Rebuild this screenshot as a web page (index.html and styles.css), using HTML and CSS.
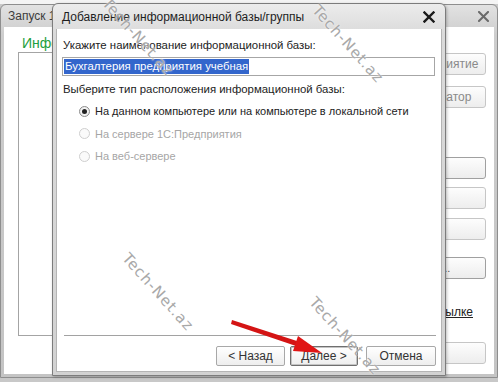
FILE: index.html
```html
<!DOCTYPE html>
<html lang="ru">
<head>
  <meta charset="UTF-8" />
  <title>Добавление информационной базы/группы</title>
  <link rel="stylesheet" href="styles.css">
</head>
<body>
  <div class="desktop">
    <div class="window main">
      <div class="titlebar">
        <span class="title">Запуск 1С:Предприятия</span>
        <svg class="close close-main" width="11" height="11" viewBox="0 0 11 11"><path d="M1 1L10 10M10 1L1 10" /></svg>
      </div>
      <div class="main-body">
        <div class="main-left">
          <div class="group-title">Информационные базы</div>
          <div class="list"></div>
        </div>
        <div class="main-right">
          <div class="btn big b1">1С:Предприятие</div>
          <div class="btn big b2">Конфигуратор</div>
          <div class="btn b3">Добавить...</div>
          <div class="btn b4">Изменить...</div>
          <div class="btn b5">Удалить</div>
          <div class="btn b6">Настройка...</div>
          <div class="link"><span>Получить по ссылке</span></div>
          <div class="btn b7">Выход</div>
        </div>
      </div>
    </div>

    <div class="window dialog">
      <div class="titlebar">
        <span class="title">Добавление информационной базы/группы</span>
        <svg class="close close-dialog" width="12" height="12" viewBox="0 0 12 12"><path d="M1.5 1.5L10.5 10.5M10.5 1.5L1.5 10.5" /></svg>
      </div>
      <div class="dialog-body">
        <div class="label">Укажите наименование информационной базы:</div>
        <div class="input"><span class="selected">Бухгалтерия предприятия учебная</span></div>
        <div class="label label-type">Выберите тип расположения информационной базы:</div>
        <div class="radios">
          <div class="radio checked"><span class="dot"></span>На данном компьютере или на компьютере в локальной сети</div>
          <div class="radio disabled"><span class="dot"></span>На сервере 1С:Предприятия</div>
          <div class="radio disabled"><span class="dot"></span>На веб-сервере</div>
        </div>
        <div class="spacer"></div>
        <div class="separator"></div>
        <div class="buttons">
          <div class="dbtn back">&lt; Назад</div>
          <div class="dbtn next">Далее &gt;</div>
          <div class="dbtn cancel">Отмена</div>
        </div>
      </div>
    </div>

    <div class="watermark wm1">Tech-Net.az</div>
    <div class="watermark wm2">Tech-Net.az</div>
    <div class="watermark wm3">Tech-Net.az</div>
    <div class="watermark wm4">Tech-Net.az</div>

    <svg class="arrow" width="498" height="382" viewBox="0 0 498 382">
      <path d="M232 320 L300 342 L299 347 L231 324 Z" fill="#d41414" />
      <path d="M322 353 L293 351 L298 336 Z" fill="#e01515" />
    </svg>
  </div>
</body>
</html>
```

FILE: styles.css
```css
body {
  margin: 0;
  font-family: 'Liberation Sans', Arial, sans-serif;
  font-size: 11.4px;
  color: #222;
}
.desktop {
  position: relative;
  width: 498px;
  height: 382px;
  overflow: hidden;
  background: linear-gradient(#f4f4f4 0, #f4f4f4 4px, #c8c8c8 4px);
}
.window {
  position: absolute;
  box-sizing: border-box;
  display: flex;
  flex-direction: column;
  border-radius: 6px 6px 0 0;
}
.titlebar {
  display: flex;
  align-items: center;
  justify-content: space-between;
}
.close path {
  fill: none;
  stroke-linecap: square;
}

/* background window */
.main {
  left: 0;
  top: 4px;
  width: 498px;
  height: 374px;
  border: 1px solid #8e8e8e;
  padding: 0 3px 3px;
  background: linear-gradient(#e2e2e2, #cdcdcd 30px, #c4c4c4);
}
.main .titlebar {
  height: 22px;
  padding: 0 4px;
}
.main .title {
  color: #3c3c3c;
  font-size: 12px;
}
.close-main {
  margin-right: 1px;
}
.close-main path {
  stroke: #6a6a6a;
  stroke-width: 2;
}
.main-body {
  flex: 1;
  display: flex;
  background: #fff;
  padding: 8px 8px 0 14px;
}
.main-left {
  flex: 1;
  display: flex;
  flex-direction: column;
}
.group-title {
  color: #23a040;
  font-size: 14px;
  line-height: 16px;
  margin-left: 4px;
}
.list {
  margin-top: 1px;
  height: 282px;
  border: 1px solid #a4a4a4;
  margin-right: 8px;
}
.main-right {
  width: 108px;
  display: flex;
  flex-direction: column;
}
.btn {
  box-sizing: border-box;
  height: 22px;
  line-height: 20px;
  border: 1px solid #c6c6c6;
  border-radius: 3px;
  background: linear-gradient(#fdfdfd, #ededed);
  text-align: center;
  color: #555;
  font-size: 12px;
}
.big {
  color: #8a8a8a;
}
.b1 { margin-top: 18px; }
.b2 { margin-top: 11px; }
.b3 { margin-top: 49px; border-color: #a0a0a0; }
.b4 { margin-top: 8px; }
.b5 { margin-top: 9px; }
.b6 { margin-top: 17px; border-color: #a0a0a0; }
.b7 { margin-top: 22px; padding-right: 14px; }
.b3, .b4, .b5, .b6 {
  text-align: left;
  padding-left: 8px;
  font-size: 11px;
}
.link {
  margin-top: 25px;
  line-height: 16px;
  display: flex;
  justify-content: flex-end;
  padding-right: 13px;
  font-size: 12px;
}
.link span {
  flex: none;
  white-space: nowrap;
  text-decoration: underline;
  color: #222;
}

/* dialog */
.dialog {
  left: 52px;
  top: 3px;
  width: 394px;
  height: 373px;
  border: 1px solid #7c7c7c;
  padding: 0 4px 4px;
  background: linear-gradient(#ececec, #dadada 30px, #d2d2d2);
  box-shadow: 1px 1px 3px rgba(0, 0, 0, 0.25);
}
.dialog .titlebar {
  height: 25px;
  padding: 0 4px 0 5px;
}
.dialog .title {
  color: #1e1e1e;
  font-size: 12px;
}
.close-dialog {
  margin-right: 2px;
}
.close-dialog path {
  stroke: #1a1a1a;
  stroke-width: 2.4;
}
.dialog-body {
  flex: 1;
  display: flex;
  flex-direction: column;
  background: #fff;
  padding: 8px 6px 5px;
  border: 1px solid #b4b4b4;
  border-top: none;
  margin: 0 -1px -1px;
}
.label {
  line-height: 16px;
  color: #222;
}
.input {
  box-sizing: border-box;
  margin: 4px 0 0 -1px;
  height: 19px;
  border: 1px solid #a6a6a6;
  padding: 1px 0 0 1px;
}
.selected {
  display: inline-block;
  line-height: 15px;
  background: #3366cc;
  color: #fff;
  padding: 0 1px;
}
.label-type {
  margin-top: 5px;
}
.radios {
  margin-top: 6px;
  padding-left: 16px;
  display: flex;
  flex-direction: column;
  gap: 6.5px;
  font-size: 11px;
}
.radio {
  display: flex;
  align-items: center;
  line-height: 16px;
  gap: 5px;
  white-space: nowrap;
}
.dot {
  box-sizing: border-box;
  width: 11px;
  height: 11px;
  border-radius: 50%;
  border: 1px solid #8c8c8c;
  background: radial-gradient(#ffffff, #e6e6e6);
  display: flex;
  align-items: center;
  justify-content: center;
}
.checked .dot::after {
  content: "";
  width: 5px;
  height: 5px;
  border-radius: 50%;
  background: #222;
}
.disabled {
  color: #a6a6a6;
}
.disabled .dot {
  border-color: #cfcfcf;
  background: #fafafa;
}
.spacer {
  flex: 1;
}
.separator {
  border-top: 1px solid #a2a2a2;
  margin: 0 -1px 10px 1px;
}
.buttons {
  display: flex;
  justify-content: flex-end;
  margin-right: -1px;
}
.dbtn {
  box-sizing: border-box;
  height: 20px;
  line-height: 18px;
  text-align: center;
  border: 1px solid #a8a8a8;
  border-radius: 2px;
  background: linear-gradient(#ffffff, #eeeeee);
  color: #333;
  font-size: 12px;
}
.back { width: 69px; }
.next {
  width: 68px;
  margin-left: 5px;
  border-color: #6f6f6f;
  box-shadow: inset 0 0 0 1px #c4c4c4;
}
.cancel {
  width: 70px;
  margin-left: 8px;
}

/* watermark and arrow overlays */
.watermark {
  position: absolute;
  width: 130px;
  height: 18px;
  line-height: 18px;
  text-align: center;
  font-family: 'DejaVu Sans', sans-serif;
  font-size: 15px;
  letter-spacing: 1px;
  color: #a8a8a8;
  text-shadow: 0 0 2px #fff;
  transform: rotate(48deg);
  pointer-events: none;
}
.wm1 { left: 73px; top: 28px; }
.wm2 { left: 283px; top: 35px; }
.wm3 { left: 93px; top: 283px; }
.wm4 { left: 280px; top: 327px; }
.arrow {
  position: absolute;
  left: 0;
  top: 0;
  pointer-events: none;
}
```
